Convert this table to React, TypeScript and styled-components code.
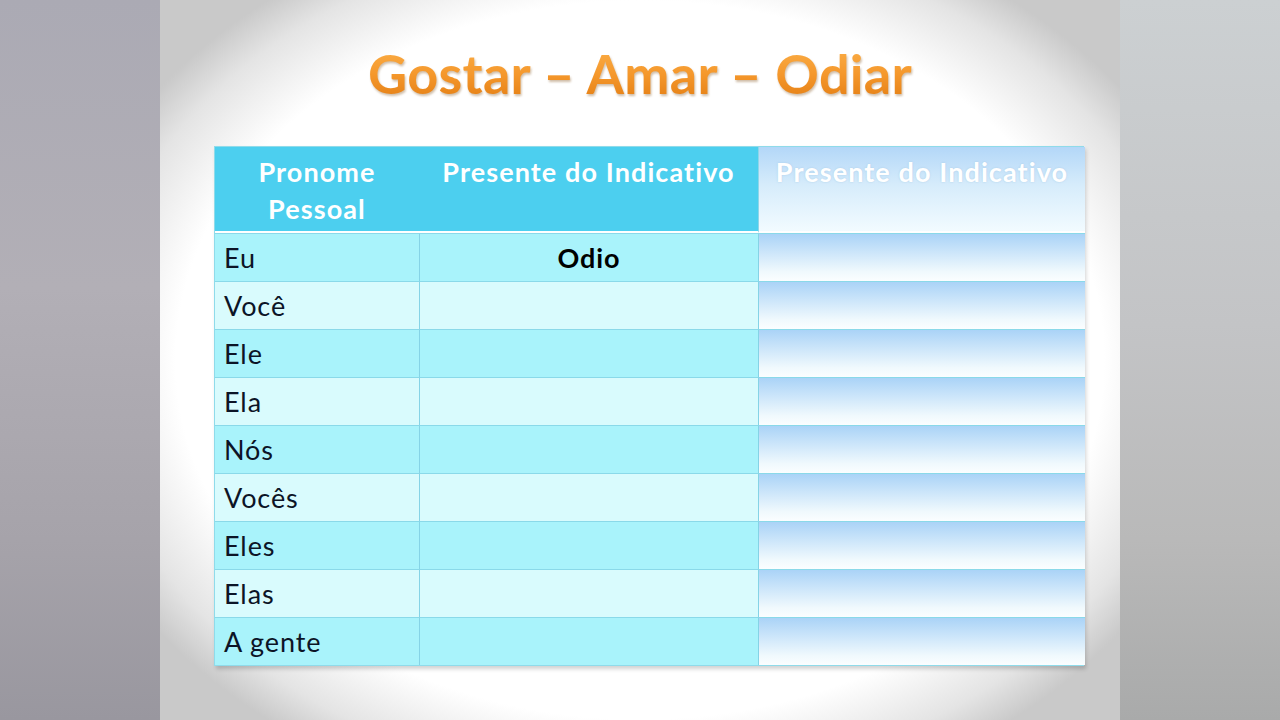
import React from "react";
import styled, { createGlobalStyle } from "styled-components";

const Global = createGlobalStyle`
  html, body { margin: 0; padding: 0; background: #fff; }
  body { font-family: Lato, "Open Sans", sans-serif; }
`;

const Stage = styled.div`
  display: flex;
  width: 1280px;
  height: 720px;
  overflow: hidden;
`;

const SidePanel = styled.div<{ $side: "left" | "right" }>`
  flex: 0 0 160px;
  background: ${(p) =>
    p.$side === "left"
      ? "linear-gradient(180deg, #abaab4 0%, #b2afb6 40%, #a6a3aa 75%, #99979f 100%)"
      : "linear-gradient(180deg, #ccd0d2 0%, #c3c4c6 45%, #b9b9b9 75%, #a9aaaa 100%)"};
`;

const Slide = styled.div`
  flex: 0 0 960px;
  display: flex;
  flex-direction: column;
  align-items: stretch;
  background: radial-gradient(
    ellipse 62% 64% at 50% 50%,
    #ffffff 0%,
    #ffffff 78%,
    #e4e4e4 92%,
    #c9c9c9 100%
  );
`;

const Title = styled.h1`
  margin: 44px 0 0 0;
  text-align: center;
  font-family: Lato, "Open Sans", sans-serif;
  font-weight: 700;
  font-size: 54px;
  line-height: 60px;
  letter-spacing: 0.3px;
  background: linear-gradient(180deg, #fbb04a 0%, #f5982c 50%, #e27c12 100%);
  -webkit-background-clip: text;
  background-clip: text;
  color: transparent;
  filter: drop-shadow(1px 2px 1px rgba(120, 70, 10, 0.35));
`;

const Table = styled.div`
  margin: 42px 0 0 54px;
  width: 870px;
  display: grid;
  grid-template-columns: 204px 339px 327px;
  grid-template-rows: 86px repeat(9, 48px);
  border: 1px solid #8fdbea;
  box-sizing: border-box;
  box-shadow: 2px 3px 4px rgba(0, 0, 0, 0.18);
`;

const HeadCell = styled.div<{ $pale?: boolean }>`
  box-sizing: border-box;
  padding-top: 6px;
  text-align: center;
  font-weight: 700;
  font-size: 27px;
  line-height: 37px;
  letter-spacing: 1.1px;
  color: #ffffff;
  border-bottom: 2px solid #ffffff;
  background: ${(p) =>
    p.$pale
      ? "linear-gradient(180deg, #b3d7f8 0%, #d6ecfb 45%, #f2fbff 100%)"
      : "#4ccfef"};
  text-shadow: ${(p) => (p.$pale ? "0 0 2px rgba(150,190,220,0.6)" : "none")};
  border-left: ${(p) => (p.$pale ? "1px solid #8fd6e8" : "none")};
`;

const Cell = styled.div<{ $odd: boolean; $col: number; $bold?: boolean }>`
  box-sizing: border-box;
  display: flex;
  align-items: center;
  justify-content: ${(p) => (p.$col === 0 ? "flex-start" : "center")};
  padding-left: ${(p) => (p.$col === 0 ? "9px" : "0")};
  font-size: 27px;
  letter-spacing: 0.9px;
  font-weight: ${(p) => (p.$bold ? 700 : 400)};
  color: ${(p) => (p.$bold ? "#000" : "#0c1426")};
  border-top: 1px solid #8ad9e9;
  border-left: ${(p) => (p.$col === 0 ? "none" : "1px solid #85d3e6")};
  background: ${(p) =>
    p.$col === 2
      ? "linear-gradient(180deg, #aad3f7 0%, #cde6fa 40%, #f0f9fd 80%, #fbfeff 100%)"
      : p.$odd
      ? "#a9f3fb"
      : "#d9fbfd"};
`;

const rows: { label: string; value?: string }[] = [
  { label: "Eu", value: "Odio" },
  { label: "Você" },
  { label: "Ele" },
  { label: "Ela" },
  { label: "Nós" },
  { label: "Vocês" },
  { label: "Eles" },
  { label: "Elas" },
  { label: "A gente" },
];

export default function App() {
  return (
    <>
      <Global />
      <Stage>
        <SidePanel $side="left" />
        <Slide>
          <Title>Gostar – Amar – Odiar</Title>
          <Table>
            <HeadCell>
              Pronome
              <br />
              Pessoal
            </HeadCell>
            <HeadCell>Presente do Indicativo</HeadCell>
            <HeadCell $pale>Presente do Indicativo</HeadCell>
            {rows.map((r, i) => (
              <React.Fragment key={r.label}>
                <Cell $odd={i % 2 === 0} $col={0}>
                  {r.label}
                </Cell>
                <Cell $odd={i % 2 === 0} $col={1} $bold>
                  {r.value ?? ""}
                </Cell>
                <Cell $odd={i % 2 === 0} $col={2} />
              </React.Fragment>
            ))}
          </Table>
        </Slide>
        <SidePanel $side="right" />
      </Stage>
    </>
  );
}
